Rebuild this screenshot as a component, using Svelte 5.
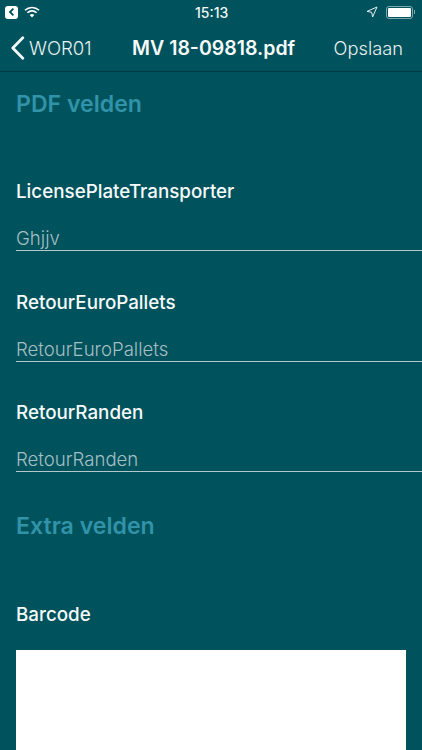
<script>
  const pdfFields = [
    { label: 'LicensePlateTransporter', value: 'Ghjjv' },
    { label: 'RetourEuroPallets', value: 'RetourEuroPallets' },
    { label: 'RetourRanden', value: 'RetourRanden' },
  ];
</script>

<div class="screen">
  <div class="statusbar">
    <div class="status-left">
      <span class="back-badge">
        <svg width="12" height="12" viewBox="0 0 12 12"><path d="M7.4 2.6 4 6l3.4 3.4" fill="none" stroke="#00525c" stroke-width="1.9" /></svg>
      </span>
      <svg width="16" height="12" viewBox="0 0 16 12">
        <path d="M1 4.3a10 10 0 0 1 14 0" fill="none" stroke="#fff" stroke-width="1.6" />
        <path d="M3.4 6.7a6.6 6.6 0 0 1 9.2 0" fill="none" stroke="#fff" stroke-width="1.6" />
        <path d="M5.7 9a3.3 3.3 0 0 1 4.6 0L8 11.4z" fill="#fff" />
      </svg>
    </div>
    <span class="clock">15:13</span>
    <div class="status-right">
      <svg width="12" height="12" viewBox="0 0 12 12"><path d="M11 1 1 5.4l4.7.9.9 4.7z" fill="none" stroke="#e6f0f1" stroke-width="1" stroke-linejoin="round" /></svg>
      <span class="battery"><span class="battery-fill"></span></span>
      <span class="battery-cap"></span>
    </div>
  </div>

  <nav class="navbar">
    <div class="nav-back">
      <svg width="15" height="24" viewBox="0 0 15 24"><path d="M12.8 1.8 2.8 12l10 10.2" fill="none" stroke="#f2f7f7" stroke-width="2.8" stroke-linecap="round" stroke-linejoin="round" /></svg>
      <span>WOR01</span>
    </div>
    <div class="nav-title">MV 18-09818.pdf</div>
    <div class="nav-action">Opslaan</div>
  </nav>

  <main class="content">
    <h2 class="section">PDF velden</h2>

    <div class="fields">
      {#each pdfFields as field}
        <div class="field">
          <div class="label">{field.label}</div>
          <div class="input">{field.value}</div>
        </div>
      {/each}
    </div>

    <h2 class="section extra">Extra velden</h2>

    <div class="label barcode-label">Barcode</div>
    <div class="barcode"></div>
  </main>
</div>

<style>
  :global(body) {
    margin: 0;
    background: #00525c;
  }

  .screen {
    width: 422px;
    height: 750px;
    overflow: hidden;
    background: #00525c;
    color: #fff;
    font-family: Inter, "Liberation Sans", sans-serif;
  }

  .statusbar {
    height: 24px;
    display: grid;
    grid-template-columns: 190px auto 1fr;
    align-items: center;
    padding: 0 7px 0 5px;
  }

  .status-left {
    display: flex;
    align-items: center;
    gap: 6px;
  }

  .back-badge {
    width: 13px;
    height: 13px;
    border-radius: 3px;
    background: #fff;
    display: flex;
    align-items: center;
    justify-content: center;
  }

  .clock {
    font-size: 14px;
    font-weight: 500;
    color: #f2f7f7;
  }

  .status-right {
    display: flex;
    align-items: center;
    justify-content: flex-end;
    gap: 1px;
  }

  .status-right svg {
    margin-right: 7px;
  }

  .battery {
    width: 23px;
    height: 9px;
    border: 1px solid #7fa8ad;
    border-radius: 3px;
    padding: 1px;
    box-sizing: content-box;
    display: flex;
  }

  .battery-fill {
    flex: 1;
    background: #fff;
    border-radius: 1px;
  }

  .battery-cap {
    width: 1px;
    height: 4px;
    background: #7fa8ad;
  }

  .navbar {
    height: 48px;
    display: flex;
    align-items: center;
    justify-content: space-between;
    padding: 0 19px 0 10px;
    border-bottom: 1px solid #003c45;
    box-sizing: border-box;
  }

  .nav-back {
    display: flex;
    align-items: center;
    gap: 4px;
    font-size: 18.6px;
    font-weight: 300;
    color: #e8f1f2;
  }

  .nav-title {
    margin-left: 2px;
    font-size: 19.5px;
    font-weight: 600;
    color: #f7fafa;
  }

  .nav-action {
    font-size: 18.3px;
    font-weight: 300;
    color: #e8f1f2;
  }

  .content {
    padding-left: 16px;
  }

  .section {
    margin: 0;
    padding-top: 18px;
    font-size: 23.1px;
    line-height: 28px;
    font-weight: 600;
    color: #3193a8;
  }

  .fields {
    margin-top: 63px;
    display: flex;
    flex-direction: column;
    gap: 40.5px;
  }

  .label {
    font-size: 18.8px;
    line-height: 22px;
    font-weight: 500;
    color: #f7fafa;
  }

  .input {
    margin-top: 21px;
    height: 26px;
    line-height: 28px;
    font-size: 18.6px;
    font-weight: 300;
    color: #a5bfc3;
    border-bottom: 1px solid #b4c8cb;
  }

  .extra {
    padding-top: 40px;
  }

  .barcode-label {
    margin-top: 64px;
  }

  .barcode {
    width: 390px;
    height: 130px;
    margin-top: 24px;
    background: #fff;
  }
</style>
